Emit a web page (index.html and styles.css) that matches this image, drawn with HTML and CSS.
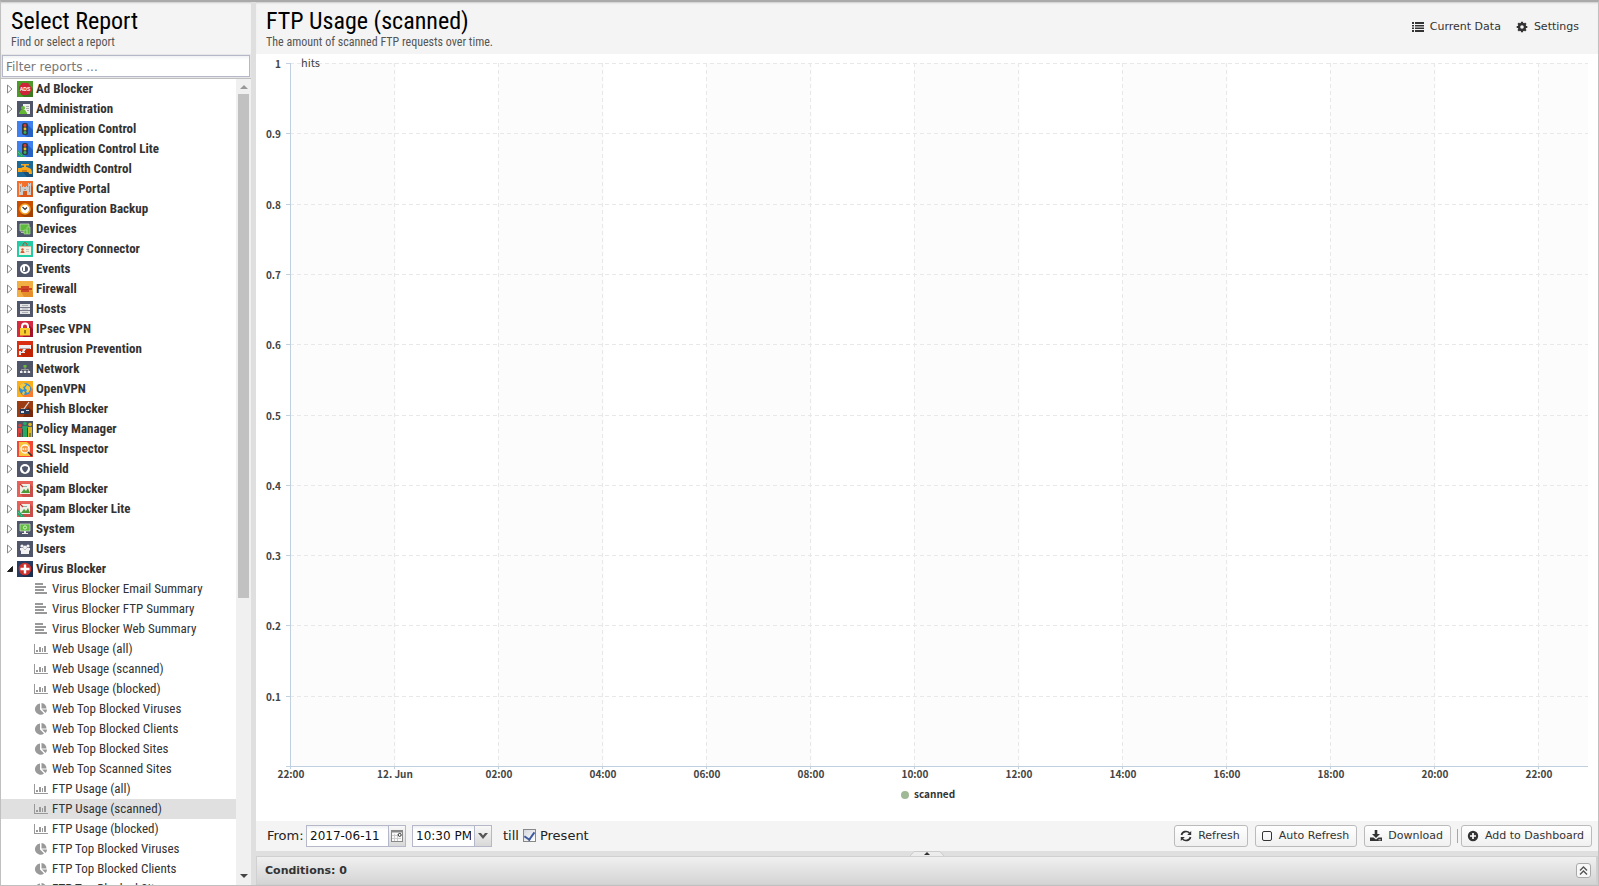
FILE: index.html
```html
<!DOCTYPE html>
<html lang="en">
<head>
    <meta charset="UTF-8">
    <meta name="viewport" content="width=device-width, initial-scale=1.0">
    <title>Reports - FTP Usage (scanned)</title>
    <link rel="stylesheet" href="styles.css">
</head>
<body>

    <svg class="sprite" aria-hidden="true">
        <!-- category icons -->
        <symbol id="ads" viewBox="0 0 16 16"><path fill="#4c9a2a" d="M0 0h16v16H0z"/><path fill="#3a7a1e" d="M12 4l4 4v8H7l-3-3z"/><path fill="#cf2338" d="M5 2h6l3 4v4l-3 4H5l-3-4V6z"/><text x="8" y="10" text-anchor="middle" font-family="Liberation Sans, sans-serif" font-size="5" font-weight="700" fill="#fff">ADS</text></symbol>
        <symbol id="admin" viewBox="0 0 16 16"><path fill="#50566a" d="M0 0h16v16H0z"/><path fill="#eee" d="M6 3h7v10H6z"/><path stroke="#aaa" d="M9 5.500h3M9 7.500h3M10 9.500h2"/><circle cx="6" cy="7" r="2" fill="#63b832"/><path fill="#63b832" d="M2 13v-1l2-3h4l2 3v1z"/></symbol>
        <symbol id="traffic" viewBox="0 0 16 16"><path fill="#3f80ee" d="M0 0h16v16H0z"/><path fill="#2560c4" d="M10 3l6 6v7h-6l-4-3z"/><rect x="5" y="2" width="6" height="12" rx="2" fill="#333c46"/><circle cx="8" cy="4.500" r="1.400" fill="#e63b31"/><circle cx="8" cy="8" r="1.400" fill="#f0c02d"/><circle cx="8" cy="11.500" r="1.400" fill="#35b15c"/></symbol>
        <symbol id="lite" viewBox="0 0 16 16"><path fill="#27a567" d="M0 8l8 8H3l-3-3z"/><path stroke="#9ad9b8" stroke-width=".8" stroke-dasharray="1 1" d="M1 11l4 4"/></symbol>
        <symbol id="tap" viewBox="0 0 16 16"><path fill="#1d6a98" d="M0 0h16v16H0z"/><path fill="#15517a" d="M6 11l8 0 2 2v3H10z"/><path fill="#f7a81c" d="M1 7h3l2-1h4l2 1c2 0 3 2 3 6h-3c0-2-1-2-2-2H1zM7 4h2v3H7zM4 3h8v1.500H4z"/><path fill="#d77f10" d="M5 9h5v2H5z"/></symbol>
        <symbol id="portal" viewBox="0 0 16 16"><path fill="#f3702c" d="M0 0h16v16H0z"/><path fill="#d9571b" d="M13 3l3 3v10H4l-1-1z"/><path fill="#ccc" d="M2 2h1v1h1V2h1v4h1V5h1v1h2V5h1v1h1V2h1v1h1V2h1v12h-4v-4H6v4H2z"/><path stroke="#999" d="M3.500 5v6M12.500 5v6M7 8.500h2"/></symbol>
        <symbol id="backup" viewBox="0 0 16 16"><path fill="#c94f00" d="M0 0h16v16H0z"/><path fill="#a34000" d="M12 4l4 4v8H7l-3-3z"/><circle cx="8" cy="8" r="5" fill="#fff" stroke="#f4a024" stroke-width="1.600"/><path fill="none" stroke="#333" stroke-width="1.200" d="M5.500 6 8 8.500l2-2"/></symbol>
        <symbol id="devices" viewBox="0 0 16 16"><path fill="#50566a" d="M0 0h16v16H0z"/><path fill="#5cba3d" stroke="#ddd" stroke-width=".7" d="M3 3h9v7H3z"/><path fill="#5cba3d" stroke="#a9dd95" stroke-width=".7" d="M10 6h3v7h-3zM7 9h3v4H7z"/><path stroke="#bbb" d="M4 11.500h3"/></symbol>
        <symbol id="directory" viewBox="0 0 16 16"><path fill="#24cba4" d="M0 0h16v16H0z"/><path fill="#f5f0df" d="M2 5h12v9H2z"/><path fill="#d6b89d" d="M2 5h12v1H2z"/><path fill="none" stroke="#b05030" d="M6 5V3l2-1.500L10 3v2"/><circle cx="5.500" cy="8.500" r="1.200" fill="#d75a36"/><path fill="#d75a36" d="M3.500 12c0-3 4-3 4 0z"/><path stroke="#c9c5bc" d="M9 8.500h3M9 10.500h3"/></symbol>
        <symbol id="events" viewBox="0 0 16 16"><path fill="#50566a" d="M0 0h16v16H0z"/><circle cx="8" cy="8" r="4" fill="#50566a" stroke="#fff" stroke-width="2"/><path fill="#fff" d="M8 5v5H6V4z"/></symbol>
        <symbol id="firewall" viewBox="0 0 16 16"><path fill="#f1ae43" d="M0 0h16v16H0z"/><path fill="#e58f2a" d="M14 9l2 2v5H7l-3-5z"/><path fill="#ce4526" d="M1 7h3V5h8v2h3v2h-3v2H4V9H1z"/><path stroke="#b83420" d="M5 8.500h6"/></symbol>
        <symbol id="hosts" viewBox="0 0 16 16"><path fill="#50566a" d="M0 0h16v16H0z"/><path fill="#e4e4e4" d="M3 3h10v3H3zM3 6.700h10v2.600H3zM3 10h10v3H3z"/><path stroke="#9ba0ab" stroke-width=".8" d="M5 4.500h6M5 8h6M5 11.500h6"/></symbol>
        <symbol id="ipsec" viewBox="0 0 16 16"><path fill="#d42b42" d="M0 0h16v16H0z"/><path fill="#a3122b" d="M11 3l5 5v8H6z"/><path fill="none" stroke="#fff" stroke-width="2" d="M5 8V5.500C5 1.500 11 1.500 11 5.500V8"/><path fill="#f9cd2e" d="M3 7h10v7.500H3z"/><path stroke="#73550d" stroke-width="1.500" d="M8 9v3.500"/></symbol>
        <symbol id="intrusion" viewBox="0 0 16 16"><path fill="#d92f10" d="M0 0h16v16H0z"/><path fill="#c02204" d="M14 4l2 2v10H6l-3-4z"/><path fill="#eee" d="M2 4h12v4H9L7 11H5l1-3H2z"/><path fill="#eee" d="M2 10h2v1h4v1H4v2H2z"/><path stroke="#b3a3a3" d="M3 7.500h10"/></symbol>
        <symbol id="network" viewBox="0 0 16 16"><path fill="#50566a" d="M0 0h16v16H0z"/><path fill="none" stroke="#999" d="M4.500 11V8.500h7V11M8 6v5"/><path fill="#69b939" d="M6.500 4h3v2.500h-3z"/><path fill="#eee" d="M3 10h2.500v2H3zM6.800 10h2.500v2H6.800zM10.600 10h2.500v2h-2.500z"/></symbol>
        <symbol id="openvpn" viewBox="0 0 16 16"><path fill="#fab01d" d="M0 0h16v16H0z"/><path fill="#f77b30" d="M12 4l4 4v8H7l-3-3z"/><circle cx="8" cy="8" r="6" fill="#3491cf"/><path fill="#f6c93c" d="M3 4l3-2 3 1-1 2-2 1 1 2-1 1-3-2zM10 4l3 2v3l-2 3-2-1 1-2-2-2zM6 10l2 1-1 3-2-1z"/></symbol>
        <symbol id="phish" viewBox="0 0 16 16"><path fill="#9c3c13" d="M0 0h16v16H0z"/><path fill="#75280b" d="M11 6l5 4v6H6z"/><path fill="none" stroke="#ddd" stroke-width="1.200" d="M12 1 9 5 7 8H4"/><path fill="#263c59" d="M3 8h10v5H3z"/><path fill="#d8dee5" d="M4 10h3v2H4zM9 9h3v1H9z"/></symbol>
        <symbol id="policy" viewBox="0 0 16 16"><path fill="#50566a" d="M0 0h16v16H0z"/><circle cx="3" cy="4.500" r="1.700" fill="#dd3f3b"/><path fill="#dd3f3b" d="M1 7h4v9H1z"/><circle cx="8" cy="2.500" r="1.800" fill="#26aa64"/><path fill="#26aa64" d="M5.500 5h5v11h-5z"/><circle cx="13" cy="3.500" r="1.800" fill="#d9b622"/><path fill="#d9b622" d="M11 6h4v10h-4z"/><path stroke="#35503c" d="M5.500 8v8M10.500 7v9M3 12v4M13 12v4"/></symbol>
        <symbol id="ssl" viewBox="0 0 16 16"><path fill="#f04835" d="M0 0h16v16H0z"/><path fill="#f9c33a" d="M2 1h8l3 3v11H2z"/><circle cx="8" cy="8" r="4" fill="#f99b45" stroke="#fff" stroke-width="1.300"/><path stroke="#fff" stroke-width="1.300" stroke-dasharray="1.500 .8" d="M5.500 8h5"/><path stroke="#333" stroke-width="1.700" d="M11 11l4 4"/></symbol>
        <symbol id="shield" viewBox="0 0 16 16"><path fill="#50566a" d="M0 0h16v16H0z"/><circle cx="8" cy="8" r="5" fill="#fff"/><path fill="#50566a" d="M5 6l3-1 3 1c0 3-1 4-3 5.500C6 10 5 9 5 6z"/></symbol>
        <symbol id="spam" viewBox="0 0 16 16"><path fill="#e56159" d="M0 0h16v16H0z"/><path fill="#c94d48" d="M13 3l3 3v10H6l-2-3z"/><path fill="#efefe8" d="M3 3h10v10H3z"/><path fill="#4b9b38" d="M4 12l3-4 2 2 2-3 2 5z"/><path fill="#8bb6aa" d="M6 5h4v1H6z"/><path stroke="#c7372e" stroke-width="1.200" d="M3 3l3 3"/></symbol>
        <symbol id="system" viewBox="0 0 16 16"><path fill="#50566a" d="M0 0h16v16H0z"/><path fill="#60bd3f" stroke="#ddd" stroke-width=".7" d="M3 3h10v7H3z"/><circle cx="8" cy="6.500" r="1.600" fill="none" stroke="#d8f4cd"/><path fill="#eee" d="M7 10h2v2h2v1H5v-1h2z"/></symbol>
        <symbol id="users" viewBox="0 0 16 16"><path fill="#50566a" d="M0 0h16v16H0z"/><g fill="#f3f3f3"><circle cx="5" cy="5" r="1.600"/><circle cx="11" cy="5" r="1.600"/><circle cx="8" cy="6.500" r="1.900"/><path d="M3 7h3l2 2 2-2h3v2l-1 1v3H4v-3L3 9z"/></g></symbol>
        <symbol id="virus" viewBox="0 0 16 16"><path fill="#263d63" d="M0 0h16v16H0z"/><path fill="#192d4e" d="M13 4l3 3v9H7l-3-3z"/><circle cx="8" cy="8" r="6.300" fill="#cb302c"/><path fill="#fff" d="M6.800 3.500h2.400v3.300h3.300v2.400H9.200v3.300H6.800V9.200H3.500V6.800h3.300z"/></symbol>

        <!-- report type icons -->
        <symbol id="text" viewBox="0 0 14 14"><path fill="#999" d="M1 1h8v2H1zM1 4h11v2H1zM1 7h9v2H1zM1 10h12v2H1z"/></symbol>
        <symbol id="bars" viewBox="0 0 14 14"><path fill="#999" d="M0 2h1v9h13v1H0zM2 8h2v2H2zM5 5h2v5H5zM8 6h1v4H8zM10 4h2v6h-2z"/></symbol>
        <symbol id="pie" viewBox="0 0 14 14"><path fill="#999" d="M6 1.500v6l4 4A5.600 5.600 0 1 1 6 1.500zM7.500 1A5.500 5.500 0 0 1 12.500 6.500h-5zM8 7.500h5c0 1.500-.6 2.600-1.500 3.500z"/></symbol>

        <!-- toolbar icons -->
        <symbol id="list" viewBox="0 0 12 12"><path fill="currentColor" d="M0 1h2v2H0zM3 1h9v2H3zM0 4h2v1.500H0zM3 4h9v1.500H3zM0 6.500h2V8H0zM3 6.500h9V8H3zM0 9h2v2H0zM3 9h9v2H3z"/></symbol>
        <symbol id="cog" viewBox="0 0 12 12"><circle cx="6" cy="6" r="3" fill="none" stroke="currentColor" stroke-width="2.400"/><path stroke="currentColor" stroke-width="2.200" d="M6 .7v2M6 9.300v2M.7 6h2M9.300 6h2M2.200 2.200l1.500 1.500M8.300 8.300l1.500 1.500M2.200 9.800l1.500-1.500M8.300 3.700l1.500-1.500"/></symbol>
        <symbol id="refresh" viewBox="0 0 12 12"><path fill="none" stroke="currentColor" stroke-width="1.700" d="M1.500 5C2.200 1.500 7 .3 9.500 3M10.500 7C9.800 10.500 5 11.700 2.500 9"/><path fill="currentColor" d="M11.200 1v4h-4zM.8 11V7h4z"/></symbol>
        <symbol id="square" viewBox="0 0 12 12"><rect x="1.500" y="1.500" width="9" height="9" rx="1.500" fill="none" stroke="currentColor"/></symbol>
        <symbol id="download" viewBox="0 0 12 12"><path fill="currentColor" d="M4.700 0h2.600v4H10L6 8 2 4h2.700zM0 7.500h3.500L6 9.500l2.500-2H12V11H0z"/><path stroke="#fff" stroke-width=".8" d="M8.500 9.800h2.300"/></symbol>
        <symbol id="plus" viewBox="0 0 12 12"><circle cx="6" cy="6" r="5.200" fill="currentColor"/><path stroke="#fff" stroke-width="1.700" d="M6 3v6M3 6h6"/></symbol>
        <symbol id="calendar" viewBox="0 0 14 14"><rect x="1.500" y="1.500" width="11" height="11" fill="#fafafa" stroke="#888"/><path fill="#888" d="M1 1h12v2.500H1z"/><path stroke="#ccc" d="M2 6.500h6M2 9.500h9M4.500 5v7M7.500 5v7"/><circle cx="9.700" cy="5.900" r="1.500" fill="none" stroke="#333"/></symbol>
    </svg>

    <div class="reports">
        <aside class="sidebar">
            <header class="panel-header">
                <h2>Select Report</h2>
                <p>Find or select a report</p>
            </header>
            <div class="filter">
                <input type="text" id="filter" placeholder="Filter reports ..." aria-label="Filter reports">
            </div>
            <div class="tree-wrap">
                <ul class="tree" id="tree"></ul>
                <div class="scrollbar">
                    <span class="arrow-up"></span>
                    <span class="thumb"></span>
                    <span class="arrow-down"></span>
                </div>
            </div>
        </aside>

        <main class="main">
            <header class="panel-header main-header">
                <div>
                    <h1>FTP Usage (scanned)</h1>
                    <p>The amount of scanned FTP requests over time.</p>
                </div>
                <nav class="header-tools">
                    <button type="button"><svg><use href="#list"/></svg>Current Data</button>
                    <button type="button"><svg><use href="#cog"/></svg>Settings</button>
                </nav>
            </header>

            <div class="chart" id="chart"></div>

            <form class="toolbar">
                <label class="from" for="date">From:</label>
                <div class="field date">
                    <input type="text" id="date" value="2017-06-11">
                    <button type="button" aria-label="Pick date"><svg><use href="#calendar"/></svg></button>
                </div>
                <div class="field time">
                    <input type="text" id="time" value="10:30 PM" aria-label="Time">
                    <button type="button" aria-label="Pick time"><svg viewBox="0 0 10 10"><path fill="#555" d="M0 2h3l2 2.500L7 2h3L5 8z"/></svg></button>
                </div>
                <span class="till">till</span>
                <input type="checkbox" id="present" checked>
                <label for="present">Present</label>

                <div class="actions">
                    <button type="button" class="btn"><svg><use href="#refresh"/></svg>Refresh</button>
                    <button type="button" class="btn"><svg><use href="#square"/></svg>Auto Refresh</button>
                    <button type="button" class="btn"><svg><use href="#download"/></svg>Download</button>
                    <span class="separator"></span>
                    <button type="button" class="btn"><svg><use href="#plus"/></svg>Add to Dashboard</button>
                </div>
            </form>

            <div class="splitter"><span class="handle"><svg viewBox="0 0 34 5"><path fill="#ececec" stroke="#ccc" d="M0 5 4 .5h26L34 5"/><path fill="#333" d="M17 1l3 3h-6z"/></svg></span></div>

            <section class="conditions">
                <h3>Conditions: 0</h3>
                <button type="button" aria-label="Expand conditions"><svg viewBox="0 0 11 11"><path fill="none" stroke="#555" stroke-width="1.400" d="M2 5.500 5.500 2 9 5.500M2 9.500 5.500 6 9 9.500"/></svg></button>
            </section>
        </main>
    </div>

    <script src="script.js"></script>

</body>
</html>
```

FILE: styles.css
```css
* {
    box-sizing: border-box;
}

body {
    margin: 0;
    height: 100vh;
    overflow: hidden;
    background: #dfdfdf;
    color: #333;
    font-family: "DejaVu Sans", sans-serif;
    font-size: 11px;
}

h1, h2, h3, p, ul {
    margin: 0;
    padding: 0;
}

button {
    font-family: "DejaVu Sans", sans-serif;
    font-size: 11px;
    color: #333;
    cursor: pointer;
}

.sprite {
    display: none;
}

.reports {
    display: grid;
    grid-template-columns: 250px 1fr;
    gap: 5px;
    height: 100vh;
    border: 1px solid #c0c0c0;
    border-top: 2px solid #aaa;
}

/* headers */

.panel-header {
    height: 52px;
    padding: 5px 10px 0;
    background: #f4f4f4;
    box-shadow: inset 0 2px 2px -1px #ccc;
    font-family: "Roboto Condensed", "Liberation Sans Narrow", Roboto, sans-serif;
}

.panel-header h1,
.panel-header h2 {
    font-size: 24px;
    line-height: 28px;
    font-weight: 400;
    color: #000;
}

.panel-header p {
    font-size: 12px;
    line-height: 14px;
    color: #555;
}

.main-header {
    display: flex;
    justify-content: space-between;
}

.header-tools {
    display: flex;
    gap: 15px;
    padding: 12px 9px 0 0;
    align-items: flex-start;
}

.header-tools button {
    display: flex;
    align-items: center;
    gap: 6px;
    padding: 0;
    border: none;
    background: none;
    line-height: 16px;
}

.header-tools svg {
    width: 12px;
    height: 12px;
}

/* sidebar */

.sidebar {
    display: flex;
    flex-direction: column;
    min-height: 0;
    background: #fff;
}

.filter {
    padding: 1px;
    background: #e6e6e6;
    border-bottom: 1px solid #c0c0c0;
}

.filter input {
    display: block;
    width: 100%;
    height: 22px;
    padding: 1px 3px 0;
    border: 1px solid #b5b8c8;
    background: linear-gradient(#f0f2f3, #fff 4px);
    font-family: inherit;
    font-size: 12px;
}

.filter input::placeholder {
    color: #777;
}

.tree-wrap {
    display: flex;
    flex: 1;
    min-height: 0;
}

.tree {
    flex: 1;
    overflow: hidden;
    list-style: none;
    font-family: "Roboto Condensed", "Liberation Sans Narrow", Roboto, sans-serif;
    font-size: 13px;
}

.tree a {
    display: flex;
    align-items: center;
    height: 20px;
    padding-left: 6px;
    color: #333;
    text-decoration: none;
    white-space: nowrap;
}

.tree span {
    padding-bottom: 2px;
}

.tree .category {
    font-weight: 700;
}

.tree .expander {
    width: 7px;
    height: 10px;
    margin-right: 3px;
}

.tree .icon {
    width: 16px;
    height: 16px;
    margin-right: 3px;
}

.tree .report {
    padding-left: 33px;
}

.tree .report .icon {
    width: 14px;
    height: 14px;
    margin-right: 4px;
}

.tree .selected {
    background: #e0e0e0;
}

.scrollbar {
    display: flex;
    flex-direction: column;
    align-items: center;
    width: 15px;
    padding: 6px 0 7px;
    background: #f0f0f0;
}

.scrollbar .arrow-up,
.scrollbar .arrow-down {
    border: 4px solid transparent;
}

.scrollbar .arrow-up {
    border-top: none;
    border-bottom-color: #999;
    margin-bottom: 5px;
}

.scrollbar .arrow-down {
    border-bottom: none;
    border-top-color: #444;
    margin-top: auto;
}

.scrollbar .thumb {
    width: 11px;
    height: 63.5%;
    background: #c1c1c1;
}

/* main panel */

.main {
    display: flex;
    flex-direction: column;
    min-width: 0;
    min-height: 0;
}

.chart {
    flex: 1;
    min-height: 0;
    background: #fff;
    overflow: hidden;
}

.chart svg {
    display: block;
    font-family: "Noto Sans CJK SC", sans-serif;
    font-size: 11px;
}

.chart .band {
    fill: #fcfcfc;
}

.chart .grid {
    stroke: #e8e8e8;
    stroke-dasharray: 4 3;
}

.chart .axis {
    stroke: #c0d0e0;
}

.chart .label {
    font-weight: 700;
    font-size: 10px;
    fill: #444;
}

.chart .axis-title {
    fill: #444;
}

.chart .legend {
    font-weight: 700;
    font-size: 10px;
    fill: #333;
}

.chart .marker {
    fill: #9fb896;
}

.toolbar {
    display: flex;
    align-items: center;
    height: 30px;
    padding: 0 6px 1px 11px;
    background: #f4f4f4;
    font-size: 13px;
    color: #222;
}

.toolbar .from {
    width: 39px;
}

.field {
    display: flex;
    height: 22px;
    border: 1px solid #b5b8c8;
    background: #fff;
}

.field input {
    width: 100%;
    min-width: 0;
    padding: 1px 3px 0;
    border: none;
    background: linear-gradient(#eef0f2, #fff 4px);
    font-family: inherit;
    font-size: 12px;
    color: #111;
}

.field button {
    flex: none;
    display: flex;
    align-items: center;
    justify-content: center;
    width: 17px;
    padding: 0;
    border: none;
    border-left: 1px solid #b5b8c8;
    background: linear-gradient(#f8f8f8, #d8d8d8);
}

.field.date {
    width: 100px;
    margin-right: 6px;
}

.field.date svg {
    width: 14px;
    height: 14px;
}

.field.time {
    width: 80px;
}

.field.time svg {
    width: 10px;
    height: 10px;
}

.till {
    margin: 0 4px 0 11px;
}

.toolbar input[type="checkbox"] {
    appearance: none;
    width: 13px;
    height: 13px;
    margin: 0 4px 0 0;
    border: 1px solid #888;
    background: linear-gradient(135deg, #d4d8de, #fff);
    display: flex;
    align-items: center;
    justify-content: center;
}

.toolbar input[type="checkbox"]:checked::after {
    content: "";
    width: 5px;
    height: 8px;
    margin-bottom: 2px;
    border: solid #3f5a9d;
    border-width: 0 2px 2px 0;
    transform: rotate(35deg);
}

.actions {
    display: flex;
    align-items: center;
    gap: 7px;
    margin-left: auto;
}

.btn {
    display: flex;
    align-items: center;
    gap: 6px;
    height: 22px;
    padding: 0 7px 0 5px;
    border: 1px solid #bbb;
    border-radius: 3px;
    background: linear-gradient(#fff, #f0f0f0);
    white-space: nowrap;
}

.btn svg {
    width: 12px;
    height: 12px;
}

.separator {
    width: 1px;
    height: 14px;
    margin: 0 -4px 0 -1px;
    background: #aca899;
}

.splitter {
    display: flex;
    justify-content: center;
    height: 5px;
    background: #dfdfdf;
}

.handle svg {
    display: block;
    width: 34px;
    height: 5px;
}

.conditions {
    display: flex;
    align-items: center;
    justify-content: space-between;
    height: 29px;
    padding: 0 5px 0 8px;
    border: 1px solid #d0d0d0;
    border-right-width: 2px;
    background: linear-gradient(#f0f0f0, #d4d4d4);
}

.conditions h3 {
    font-size: 11px;
    line-height: 14px;
}

.conditions button {
    display: flex;
    width: 15px;
    height: 15px;
    padding: 1px;
    border: 1px solid #aaa;
    border-radius: 3px;
    background: #f8f8f8;
}

.conditions svg {
    width: 11px;
    height: 11px;
}
```

FILE: script.js
```javascript
const categories = [
    ['Ad Blocker', 'ads'],
    ['Administration', 'admin'],
    ['Application Control', 'traffic'],
    ['Application Control Lite', 'traffic', true],
    ['Bandwidth Control', 'tap'],
    ['Captive Portal', 'portal'],
    ['Configuration Backup', 'backup'],
    ['Devices', 'devices'],
    ['Directory Connector', 'directory'],
    ['Events', 'events'],
    ['Firewall', 'firewall'],
    ['Hosts', 'hosts'],
    ['IPsec VPN', 'ipsec'],
    ['Intrusion Prevention', 'intrusion'],
    ['Network', 'network'],
    ['OpenVPN', 'openvpn'],
    ['Phish Blocker', 'phish'],
    ['Policy Manager', 'policy'],
    ['SSL Inspector', 'ssl'],
    ['Shield', 'shield'],
    ['Spam Blocker', 'spam'],
    ['Spam Blocker Lite', 'spam', true],
    ['System', 'system'],
    ['Users', 'users'],
    ['Virus Blocker', 'virus']
];

// reports of the expanded category
const reports = [
    ['Virus Blocker Email Summary', 'text'],
    ['Virus Blocker FTP Summary', 'text'],
    ['Virus Blocker Web Summary', 'text'],
    ['Web Usage (all)', 'bars'],
    ['Web Usage (scanned)', 'bars'],
    ['Web Usage (blocked)', 'bars'],
    ['Web Top Blocked Viruses', 'pie'],
    ['Web Top Blocked Clients', 'pie'],
    ['Web Top Blocked Sites', 'pie'],
    ['Web Top Scanned Sites', 'pie'],
    ['FTP Usage (all)', 'bars'],
    ['FTP Usage (scanned)', 'bars'],
    ['FTP Usage (blocked)', 'bars'],
    ['FTP Top Blocked Viruses', 'pie'],
    ['FTP Top Blocked Clients', 'pie'],
    ['FTP Top Blocked Sites', 'pie']
];

function renderTree() {
    let html = '';
    categories.forEach(([name, icon, lite]) => {
        const arrow = name === 'Virus Blocker'
            ? '<path fill="#222" stroke="#222" d="M5.500 2.500v5h-5z"/>'
            : '<path fill="#fff" stroke="#888" d="M.5 1v8L5 5z"/>';
        html += `<li><a href="#" class="category"><svg class="expander" viewBox="0 0 7 10">${arrow}</svg>` +
            `<svg class="icon"><use href="#${icon}"/>${lite ? '<use href="#lite"/>' : ''}</svg><span>${name}</span></a></li>`;
    });
    reports.forEach(([name, icon]) => {
        const selected = name === 'FTP Usage (scanned)' ? ' selected' : '';
        html += `<li><a href="#" class="report${selected}"><svg class="icon"><use href="#${icon}"/></svg><span>${name}</span></a></li>`;
    });
    document.getElementById('tree').innerHTML = html;
}

function renderChart() {
    const chart = document.getElementById('chart');
    const width = chart.clientWidth;
    const height = chart.clientHeight;
    const left = 34;
    const right = width - 10;
    const top = 9;
    const bottom = height - 55;
    const hours = ['22:00', '12. Jun', '02:00', '04:00', '06:00', '08:00', '10:00', '12:00', '14:00', '16:00', '18:00', '20:00', '22:00'];
    const step = (right - left) / 12.48;
    const crisp = value => Math.round(value) + 0.5;

    let bands = '';
    let lines = '';
    let labels = '';

    hours.forEach((text, i) => {
        const x = crisp(left + i * step);
        if (i % 2 === 0) {
            const end = Math.min(crisp(x + step), right);
            bands += `<rect class="band" x="${x}" y="${top}" width="${end - x}" height="${bottom - top}"/>`;
        }
        if (i > 0) {
            lines += `<path class="grid" d="M${x} ${top}V${bottom}"/>`;
        }
        lines += `<path class="axis" d="M${x} ${bottom}v3"/>`;
        labels += `<text class="label" text-anchor="middle" x="${x + 0.5}" y="${bottom + 12}">${text}</text>`;
    });

    for (let i = 1; i <= 10; i++) {
        const y = crisp(bottom - i * (bottom - top) / 10);
        lines += `<path class="grid" d="M${left} ${y}H${right}"/><path class="axis" d="M${left - 4} ${y}h4"/>`;
        labels += `<text class="label" text-anchor="end" x="${left - 9}" y="${y + 4}">${i / 10}</text>`;
    }

    const middle = Math.round(width / 2);
    chart.innerHTML = `<svg width="${width}" height="${height}">${bands}${lines}
        <path class="axis" d="M${left + 0.5} ${top}V${bottom + 3}M${left - 4} ${bottom + 0.5}H${right}"/>
        ${labels}
        <text class="axis-title" x="45" y="13">hits</text>
        <circle class="marker" cx="${middle - 22}" cy="${bottom + 29}" r="4"/>
        <text class="legend" x="${middle - 13}" y="${bottom + 32}">scanned</text>
    </svg>`;
}

renderTree();
renderChart();
window.addEventListener('resize', renderChart);
```
